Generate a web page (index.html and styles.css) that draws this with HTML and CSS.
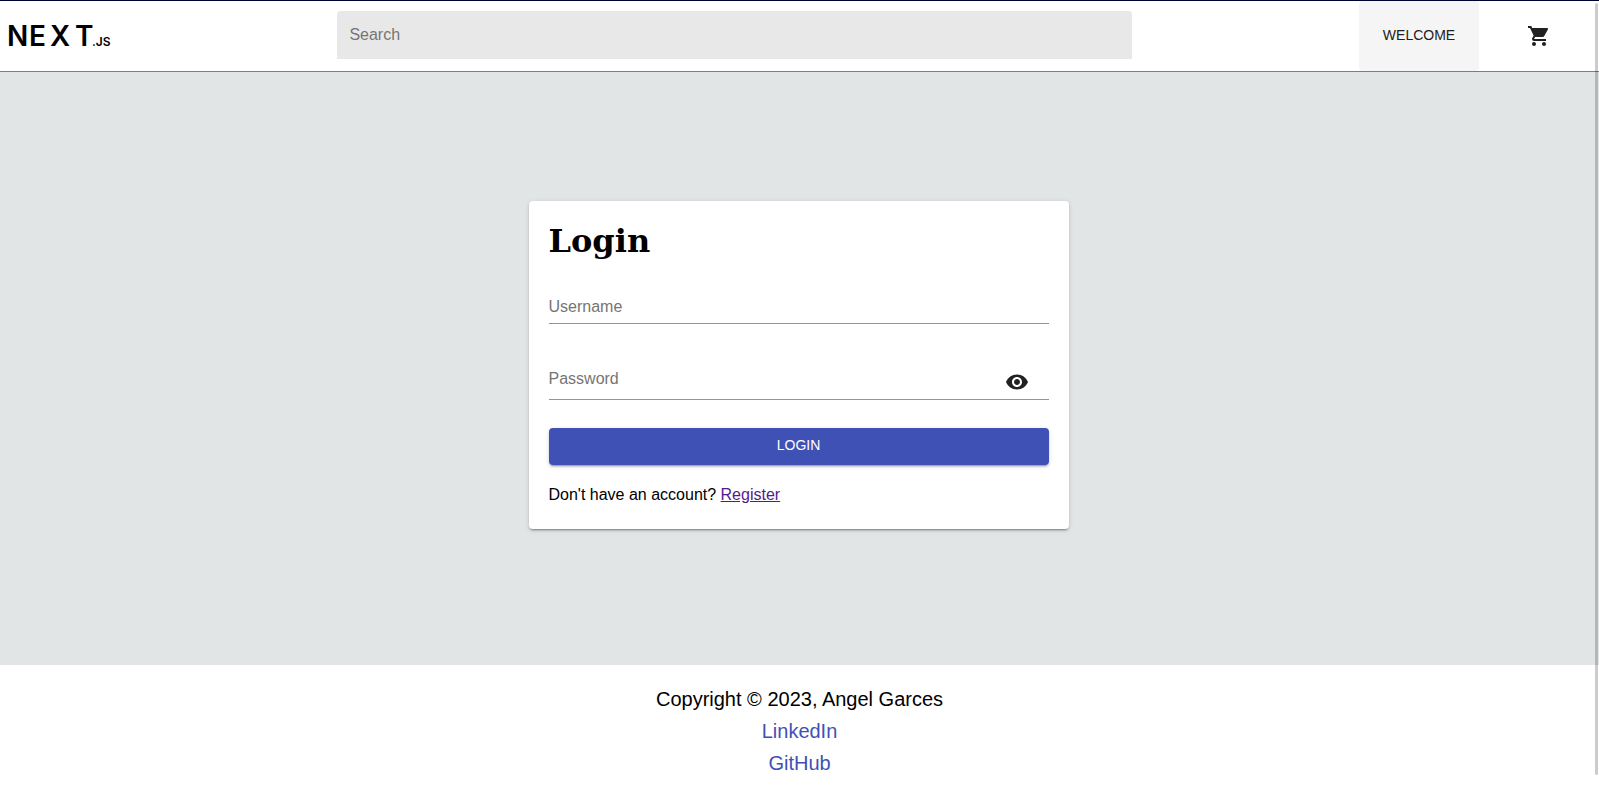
FILE: index.html
```html
<!DOCTYPE html>
<html lang="en">
<head>
<meta charset="utf-8">
<meta name="viewport" content="width=device-width, initial-scale=1">
<title>Login</title>
<link rel="stylesheet" href="styles.css">
</head>
<body>
<header class="header">
  <a class="logo" href="#" aria-label="Home">
    <svg width="120" height="48" viewBox="0 0 120 48">
      <text class="logo-name" x="7 29 50 75" y="34">NEXT</text>
      <text class="logo-suffix" x="92" y="34">.JS</text>
    </svg>
  </a>
  <input class="search" type="search" placeholder="Search" aria-label="Search">
  <nav class="actions">
    <button class="action action-active" type="button">WELCOME</button>
    <button class="action" type="button" aria-label="Cart">
      <svg class="icon" viewBox="0 0 24 24"><path d="M7 18c-1.1 0-1.99.9-1.99 2S5.9 22 7 22s2-.9 2-2-.9-2-2-2zM1 2v2h2l3.6 7.59-1.35 2.45c-.16.28-.25.61-.25.96 0 1.1.9 2 2 2h12v-2H7.42c-.14 0-.25-.11-.25-.25l.03-.12.9-1.63h7.45c.75 0 1.41-.41 1.75-1.03l3.58-6.49c.08-.14.12-.31.12-.48 0-.55-.45-1-1-1H5.21l-.94-2H1zm16 16c-1.1 0-1.99.9-1.99 2s.89 2 1.99 2 2-.9 2-2-.9-2-2-2z"/></svg>
    </button>
  </nav>
</header>
<main class="main">
  <form class="card">
    <h1 class="title">Login</h1>
    <div class="field">
      <input class="field-input" type="text" placeholder="Username" aria-label="Username">
    </div>
    <div class="field field-password">
      <input class="field-input" type="password" placeholder="Password" aria-label="Password">
      <button class="reveal" type="button" aria-label="Show password">
        <svg class="icon" viewBox="0 0 24 24"><path d="M12 4.500C7 4.500 2.730 7.610 1 12c1.730 4.390 6 7.500 11 7.500s9.270-3.110 11-7.500c-1.730-4.390-6-7.500-11-7.500zM12 17c-2.760 0-5-2.240-5-5s2.240-5 5-5 5 2.240 5 5-2.240 5-5 5zm0-8c-1.660 0-3 1.340-3 3s1.340 3 3 3 3-1.340 3-3-1.340-3-3-3z"/></svg>
      </button>
    </div>
    <button class="submit" type="submit">LOGIN</button>
    <p class="hint">Don't have an account? <a class="register" href="#">Register</a></p>
  </form>
</main>
<footer class="footer">
  <p class="footer-line">Copyright © 2023, Angel Garces</p>
  <a class="footer-link" href="#">LinkedIn</a>
  <a class="footer-link" href="#">GitHub</a>
</footer>
<div class="scroll-thumb"></div>
</body>
</html>
```

FILE: styles.css
```css
* {
  box-sizing: border-box;
}

body {
  margin: 0;
  min-height: 100vh;
  display: flex;
  flex-direction: column;
  font-family: "Liberation Sans", Arial, sans-serif;
  font-size: 16px;
  line-height: 24px;
  color: #000;
  background: #fff;
}

button,
input {
  font: inherit;
  border: 0;
  outline: 0;
}

button {
  cursor: pointer;
}

.header {
  display: grid;
  grid-template-columns: 211fr 497fr 292fr;
  height: 72px;
  border-top: 1px solid #000033;
  border-bottom: 1px solid #7b7f7b;
}

.logo {
  align-self: center;
  display: flex;
  color: #000;
}

.logo-name {
  font-family: Inter, sans-serif;
  font-size: 28px;
  font-weight: 600;
}

.logo-suffix {
  font-family: Inter, sans-serif;
  font-size: 12px;
  font-weight: 600;
}

.search {
  width: 100%;
  height: 48px;
  margin-top: 10px;
  padding: 0 12px;
  border-radius: 4px 4px 0 0;
  background: #e8e8e8;
}

.search::placeholder,
.field-input::placeholder {
  color: #757575;
  opacity: 1;
}

.actions {
  display: flex;
  justify-content: flex-end;
}

.action {
  display: flex;
  align-items: center;
  justify-content: center;
  width: 120px;
  border-radius: 4px;
  background: none;
  color: #212121;
  font-size: 14px;
}

.action-active {
  padding-bottom: 4px;
  background: #f5f5f5;
}

.icon {
  display: block;
  width: 24px;
  height: 24px;
  fill: #212121;
}

.main {
  flex: 1;
  display: flex;
  align-items: center;
  justify-content: center;
  padding: 16px 18px 24px 16px;
  background: #e1e5e6;
}

.card {
  width: 100%;
  max-width: 540px;
  padding: 20px;
  border-radius: 4px;
  background: #fff;
  box-shadow: 0 3px 1px -2px rgba(0, 0, 0, 0.2), 0 2px 2px rgba(0, 0, 0, 0.14), 0 1px 5px rgba(0, 0, 0, 0.12);
}

.title {
  margin: 0 0 28px;
  font-family: "DejaVu Serif", serif;
  font-size: 32px;
  line-height: 40px;
}

.field {
  display: flex;
  height: 35px;
  border-bottom: 1px solid #949494;
}

.field-password {
  height: 48px;
  margin: 28px 0;
  padding-right: 20px;
}

.field-input {
  flex: 1;
  min-width: 0;
  height: 36px;
  padding: 0;
  background: none;
}

.field-password .field-input {
  height: 54px;
}

.reveal {
  align-self: center;
  margin-top: 14px;
  padding: 0;
  background: none;
}

.submit {
  display: block;
  width: 100%;
  height: 37px;
  padding: 0 0 2px;
  border-radius: 4px;
  background: #3f51b5;
  color: #fff;
  font-size: 14px;
  box-shadow: 0 3px 1px -2px rgba(0, 0, 0, 0.2), 0 2px 2px rgba(0, 0, 0, 0.14), 0 1px 5px rgba(0, 0, 0, 0.12);
}

.hint {
  margin: 18px 0 2px;
}

.register {
  color: #551a8b;
}

.footer {
  display: flex;
  flex-direction: column;
  align-items: center;
  padding: 18px 16px 10px;
  font-size: 20px;
  line-height: 32px;
}

.footer-line {
  margin: 0;
}

.footer-link {
  color: #3f51b5;
  text-decoration: none;
}

.scroll-thumb {
  position: fixed;
  top: 3px;
  right: 1px;
  bottom: 14px;
  width: 3px;
  border-radius: 2px;
  background: rgba(0, 0, 0, 0.2);
}
```
